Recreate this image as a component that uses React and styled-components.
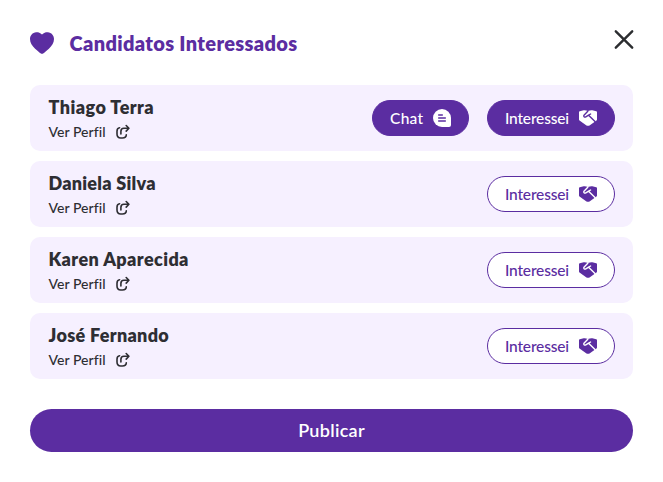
import React from "react";
import styled, { createGlobalStyle, css } from "styled-components";

const purple = "#5b2da1";
const ink = "#2e2e33";

const GlobalStyle = createGlobalStyle`
  * { box-sizing: border-box; }
  body { margin: 0; background: #fff; font-family: Lato, "Open Sans", sans-serif; }
  button { font-family: inherit; margin: 0; cursor: pointer; }
  svg { display: block; flex: none; }
`;

const Modal = styled.main`
  width: 663px;
  height: 482px;
  padding: 29px 29px 30px 30px;
  background: #fff;
`;

const Header = styled.header`
  display: flex;
  align-items: flex-start;
  height: 56px;
  color: ${purple};
`;

const HeartSlot = styled.span`
  padding-top: 3px;
`;

const Title = styled.h1`
  flex: 1;
  margin: 0 0 0 15.5px;
  font-size: 20px;
  line-height: 28px;
  font-weight: 800;
  letter-spacing: 0.34px;
  white-space: nowrap;
`;

const CloseButton = styled.button`
  padding: 0;
  border: 0;
  background: none;
  color: #2b2d30;
`;

const List = styled.ul`
  display: grid;
  gap: 10px;
  margin: 0;
  padding: 0;
  width: 603px;
  list-style: none;
`;

const Row = styled.li`
  display: flex;
  align-items: center;
  justify-content: space-between;
  height: 66px;
  padding: 0 18px;
  border-radius: 10px;
  background: #f6f0ff;
`;

const Name = styled.h2`
  margin: 0;
  padding: 1px 0 0 0.5px;
  font-size: 18px;
  line-height: 24px;
  font-weight: 800;
  color: ${ink};
  letter-spacing: ${(p) => p.$spacing}px;
  white-space: nowrap;
`;

const ProfileLink = styled.a`
  display: flex;
  align-items: center;
  gap: 9px;
  margin-top: 2px;
  height: 22px;
  padding-left: 0.5px;
  font-size: 14px;
  font-weight: 500;
  color: ${ink};
  letter-spacing: 0.05px;
`;

const LinkText = styled.span`
  width: 58px;
  white-space: nowrap;
`;

const Actions = styled.div`
  display: flex;
  gap: 18px;
`;

const Pill = styled.button`
  display: flex;
  align-items: center;
  justify-content: space-between;
  width: ${(p) => p.$width}px;
  height: 36px;
  padding: 0 17px;
  border: 1px solid ${purple};
  border-radius: 18px;
  font-size: 15.5px;
  line-height: 20px;
  font-weight: 500;
  letter-spacing: ${(p) => p.$spacing}px;
  ${(p) => p.$filled
    ? css`background: ${purple}; color: #fff;`
    : css`background: #fff; color: ${purple};`}
`;

const PublishButton = styled.button`
  display: block;
  width: 603px;
  height: 43px;
  margin-top: 30px;
  padding: 0 0 2px;
  border: 0;
  border-radius: 22px;
  background: ${purple};
  color: #fff;
  font-size: 18px;
  line-height: 24px;
  font-weight: 600;
  letter-spacing: 0.3px;
`;

const HeartIcon = () => (
  <svg width="24" height="22" viewBox="0 0 24 22" fill="currentColor">
    <path d="M12 2.600C9.900.400 7.700 0 6.200.200 2.500.500 0 3.400 0 7.100c0 3.800 2.200 7 5.100 9.700 2 1.900 4.100 3.500 5.400 4.500q1.500 1.100 3 0c1.300-1 3.400-2.600 5.400-4.500C21.800 14.100 24 10.900 24 7.100 24 3.400 21.500.500 17.800.200 16.300 0 14.100.400 12 2.600Z" />
  </svg>
);

const CloseIcon = () => (
  <svg width="20" height="21" viewBox="0 0 20 21" fill="none" stroke="currentColor" strokeWidth="2.4" strokeLinecap="round">
    <path d="M1.8 2.3 18.2 18.7M18.2 2.3 1.8 18.7" />
  </svg>
);

const ShareIcon = () => (
  <svg width="14" height="15" viewBox="0 0 14 15" fill="none" stroke="currentColor" strokeWidth="1.6" strokeLinecap="round" strokeLinejoin="round">
    <path d="M3.6 3.700C1.500 3.900 1 5 1 7.200v2.900c0 2.900.900 3.900 3.700 3.900h1.700c2.900 0 3.900-1 3.900-3.200" />
    <path d="M4.900 10V7.400c0-2.200.8-3.100 3-3.100h4.800M10.200 1.500l2.700 2.800-2.700 2.800" />
  </svg>
);

const ChatIcon = () => (
  <svg width="18" height="18" viewBox="0 0 18 18">
    <path fill="#fff" d="M9 0a9 9 0 0 1 9 9v7q0 2-2 2H9A9 9 0 0 1 9 0Z" />
    <path fill="none" stroke={purple} strokeWidth="1.5" strokeLinecap="round" d="M5.700 5.900h3.600M5.700 9h6.600M5.700 12.100h6.600" />
  </svg>
);

const HandshakeIcon = ({ $cut }) => (
  <svg width="18" height="16" viewBox="0 0 18 16">
    <path fill="currentColor" d="M0 2.300Q0 1.500.8 1.300L4.700.2Q6.500-.1 9 1.100 11.500-.1 13.300.2L17.200 1.300Q18 1.500 18 2.300V9.500Q18 10.100 17.500 10.500L10.500 15.400Q9 16.300 7.500 15.400L.5 10.500Q0 10.100 0 9.500Z" />
    <path fill="none" stroke={$cut} strokeWidth="1.4" strokeLinecap="round" strokeLinejoin="round" d="M8.800 1.300 5 5.200c-.8 1 .5 2.500 1.800 1.700L9.600 5.200 16 11.500M9.600 5.200 11.600 4" />
  </svg>
);

const candidates = [
  { name: "Thiago Terra", spacing: 0.45, matched: true },
  { name: "Daniela Silva", spacing: 0.25, matched: false },
  { name: "Karen Aparecida", spacing: 0.4, matched: false },
  { name: "José Fernando", spacing: 0.32, matched: false },
];

export default function App() {
  return (
    <>
      <GlobalStyle />
      <Modal>
        <Header>
          <HeartSlot><HeartIcon /></HeartSlot>
          <Title>Candidatos Interessados</Title>
          <CloseButton aria-label="Fechar"><CloseIcon /></CloseButton>
        </Header>
        <List>
          {candidates.map(({ name, spacing, matched }) => (
            <Row key={name}>
              <div>
                <Name $spacing={spacing}>{name}</Name>
                <ProfileLink><LinkText>Ver Perfil</LinkText><ShareIcon /></ProfileLink>
              </div>
              <Actions>
                {matched && <Pill $filled $width={97} $spacing={0.3}>Chat<ChatIcon /></Pill>}
                <Pill $filled={matched} $width={128} $spacing={-0.18}>
                  Interessei<HandshakeIcon $cut={matched ? purple : "#fff"} />
                </Pill>
              </Actions>
            </Row>
          ))}
        </List>
        <PublishButton>Publicar</PublishButton>
      </Modal>
    </>
  );
}
